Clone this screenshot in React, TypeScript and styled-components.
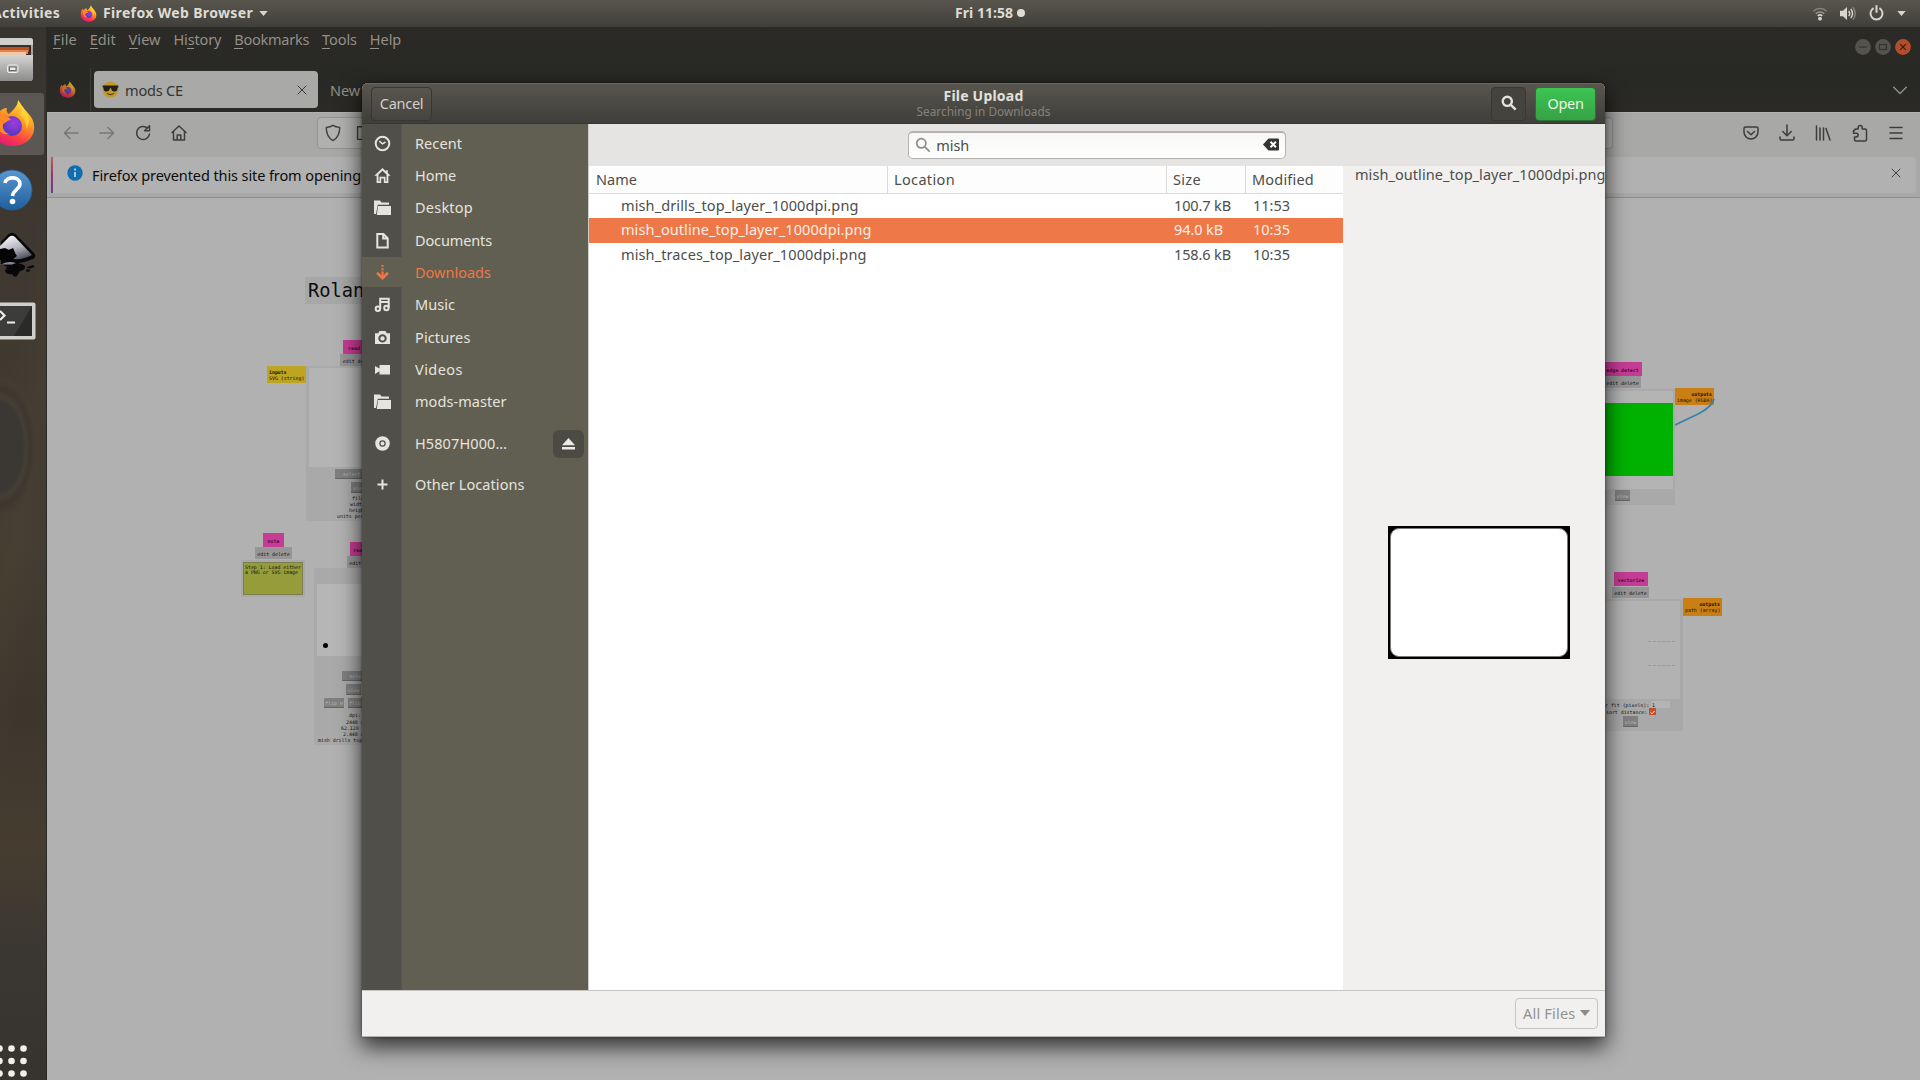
import React, { useLayoutEffect, useRef, useState } from 'react';
import styled, { createGlobalStyle } from 'styled-components';

const UI = '"Noto Sans", "Open Sans", sans-serif';
const MONO = '"DejaVu Sans Mono", "Liberation Mono", monospace';

const Global = createGlobalStyle`
  * { box-sizing: border-box; }
  html, body { margin: 0; padding: 0; overflow: hidden; }
  body { font-family: ${UI}; font-size: 14.5px; }
  svg { display: block; flex: none; }
`;

/* ---------- text that keeps a fixed advance ---------- */
const Run = styled.span`
  display: inline-block;
  white-space: nowrap;
  flex: none;
`;

function Fit({ w, children }: { w: number; children: string }) {
  const ref = useRef<HTMLSpanElement>(null);
  const [spacing, setSpacing] = useState(0);
  useLayoutEffect(() => {
    const el = ref.current;
    if (!el) return;
    el.style.letterSpacing = '0px';
    const natural = el.getBoundingClientRect().width;
    setSpacing((w - natural) / children.length);
  }, [w, children]);
  return (
    <Run ref={ref} style={{ letterSpacing: `${spacing}px` }}>
      {children}
    </Run>
  );
}

/* ---------- desktop ---------- */
const Desktop = styled.div`
  position: relative;
  width: 1920px;
  height: 1080px;
  overflow: hidden;
  display: flex;
  flex-direction: column;
  background: #b1b1b1;
`;

const TopBar = styled.header`
  height: 27px;
  flex: none;
  display: grid;
  grid-template-columns: 103px 852px 1fr auto;
  align-items: center;
  padding-bottom: 1px;
  background: linear-gradient(#58564d, #413f3a);
  color: #dedbd5;
  font-weight: 700;
  font-size: 14px;
  line-height: 24px;
`;
const Activities = styled.div`
  display: flex;
  justify-content: space-between;
  align-items: center;
  margin-left: -8px;
  padding-right: 6px;
`;
const AppMenu = styled.div`
  display: flex;
  align-items: center;
  gap: 6px;
`;
const Clock = styled.div`
  display: flex;
  align-items: center;
  gap: 4px;
`;
const Dot = styled.i`
  width: 8px;
  height: 8px;
  border-radius: 50%;
  background: #dedbd5;
`;
const Tray = styled.div`
  display: flex;
  align-items: center;
  gap: 13px;
  padding-right: 14px;
`;

const Workspace = styled.div`
  flex: 1;
  display: flex;
  min-height: 0;
`;

/* ---------- dock ---------- */
const Dock = styled.nav`
  width: 47px;
  flex: none;
  display: flex;
  flex-direction: column;
  overflow: hidden;
  background:
    radial-gradient(ellipse 42px 80px at 0 420px, #3b3834 0 55%, #453e34 62%, #3d372f 72%, #453d32 84%, transparent 92%),
    linear-gradient(100deg, transparent 30%, rgba(95, 78, 52, 0.16) 45%, transparent 60%),
    linear-gradient(#37342f, #3e3830 20%, #433c32 50%, #3d362d 65%, #463d30 78%, #3a3732 88%, #37342f);
  border-right: 1px solid #2c2a27;
`;
const DockItem = styled.div<{ $h: number; $active?: boolean }>`
  height: ${p => p.$h}px;
  width: 44px;
  display: flex;
  align-items: center;
  flex: none;
  border-radius: 0 3px 3px 0;
  background: ${p => (p.$active ? 'rgba(255,255,255,.17)' : 'transparent')};
`;
const DockSpacer = styled.div`
  flex: 1;
`;

/* ---------- browser ---------- */
const Browser = styled.main`
  flex: 1;
  display: flex;
  flex-direction: column;
  min-width: 0;
`;
const Head = styled.div`
  height: 85px;
  flex: none;
  display: flex;
  flex-direction: column;
  background: linear-gradient(#2b2a26, #282824 60%, #2b2a26);
  color: #929089;
`;
const MenuRow = styled.div`
  height: 41px;
  display: flex;
  justify-content: space-between;
  padding: 2px 9px 0 6px;
`;
const Menus = styled.div`
  display: flex;
  gap: 12.8px;
  line-height: 20px;
`;
const MenuName = styled.div<{ $uw: number; $ux?: number }>`
  height: 21px;
  background: linear-gradient(#929089, #929089) no-repeat ${p => p.$ux ?? 0}px 19px / ${p => p.$uw}px 1px;
`;
const WinButtons = styled.div`
  display: flex;
  gap: 4px;
  padding-top: 10px;
`;
const Tabs = styled.div`
  height: 44px;
  display: flex;
  align-items: center;
  padding-bottom: 1px;
`;
const Pinned = styled.div`
  width: 44px;
  height: 43px;
  padding-left: 12px;
  display: flex;
  align-items: center;
  border-right: 1px solid #3d3c38;
`;
const Tab = styled.div`
  width: 224px;
  height: 37px;
  margin-left: 3px;
  padding: 0 11px 0 8px;
  display: flex;
  align-items: center;
  gap: 6px;
  border-radius: 4px;
  background: #a9a9a8;
  color: #333332;
`;
const TabSide = styled.div`
  margin-left: auto;
`;
const IdleTab = styled.div`
  padding-left: 12px;
  flex: 1;
`;
const TabsEnd = styled.div`
  padding-right: 13px;
`;
const NavBar = styled.div`
  height: 45px;
  flex: none;
  display: flex;
  align-items: center;
  padding: 0 14px 4px 14px;
  background: #a8a8a7;
  border-top: 1px solid #b0b0ae;
`;
const NavGroup = styled.div`
  display: flex;
  gap: 16px;
  color: #3d3d3c;
`;
const UrlBox = styled.div`
  width: 1296px;
  height: 32px;
  margin-left: 128px;
  padding: 0 6px;
  display: flex;
  align-items: center;
  gap: 12px;
  border: 1px solid #929291;
  border-radius: 4px;
  background: #b0b0af;
  color: #3d3d3c;
`;
const Tools = styled.div`
  margin-left: auto;
  display: flex;
  gap: 16.3px;
  color: #3d3d3c;
`;
const NoticeRow = styled.div`
  height: 41px;
  flex: none;
  padding: 0 4px 5px;
  background: #a8a8a7;
  border-bottom: 1px solid #8d8d8c;
`;
const Notice = styled.div`
  height: 36px;
  display: flex;
  align-items: center;
  gap: 9px;
  padding-right: 15px;
  border-radius: 4px;
  background: #b1b1b1;
  color: #0c0c0c;
`;
const Stripe = styled.i`
  width: 2px;
  height: 36px;
  margin-right: 5px;
  background: linear-gradient(#b5654c, #a03070 50%, #6a3d9a);
`;
const NoticeEnd = styled.div`
  margin-left: auto;
  padding-bottom: 4px;
  color: #3d3d3c;
`;
const Page = styled.div`
  flex: 1;
  background: #b1b1b1;
`;

/* ---------- node canvas ---------- */
const Canvas = styled.div`
  position: absolute;
  inset: 0;
  font-family: ${MONO};
  font-size: 4.9px;
  line-height: 6px;
  color: #111;
`;
type Box = { $x: number; $y: number; $w: number; $h: number; $bg?: string };
const Block = styled.div<Box>`
  position: absolute;
  left: ${p => p.$x}px;
  top: ${p => p.$y}px;
  width: ${p => p.$w}px;
  height: ${p => p.$h}px;
  background: ${p => p.$bg ?? '#a9a9a9'};
`;
const Tag = styled(Block)`
  display: flex;
  align-items: center;
  justify-content: center;
  padding-top: 1px;
  white-space: nowrap;
`;
const NodeTitle = styled(Tag)`
  background: #c53c94;
  color: #5a0a40;
  font-weight: 700;
`;
const NodeEdit = styled(Tag)`
  background: #969696;
`;
const NodeButton = styled(Tag)`
  background: #7f7f7f;
  color: #b8b8b8;
  border-bottom: 1px solid #666;
`;
const Port = styled(Block)<{ $right?: boolean }>`
  padding: 3px 2px;
  line-height: 6.4px;
  white-space: nowrap;
  text-align: ${p => (p.$right ? 'right' : 'left')};
`;
const Note = styled(Block)`
  background: #949d3a;
  border: 1px solid #7b7f4d;
  outline: 2px solid #a9a9a9;
  padding: 2px 1px;
  line-height: 5.4px;
`;
const Caption = styled.div<{ $x: number; $y: number }>`
  position: absolute;
  left: ${p => p.$x}px;
  top: ${p => p.$y}px;
  white-space: nowrap;
`;
const Heading = styled(Block)`
  padding-left: 3px;
  font-size: 18.7px;
  line-height: 28px;
  color: #0d0d0d;
`;
const Wire = styled.svg`
  position: absolute;
  left: 1674px;
  top: 398px;
`;
const Overlaid = styled.div<{ $x: number; $y: number; $d: number }>`
  position: absolute;
  left: ${p => p.$x}px;
  top: ${p => p.$y}px;
  width: ${p => p.$d}px;
  height: ${p => p.$d}px;
  border-radius: 50%;
  background: #000;
`;
const DashedLine = styled(Block)`
  background: none;
  border-top: 1px dashed #999;
`;

/* ---------- dialog ---------- */
const Dialog = styled.section`
  position: absolute;
  left: 362px;
  top: 83px;
  width: 1243px;
  height: 954px;
  display: flex;
  flex-direction: column;
  border-radius: 6px 6px 0 0;
  overflow: hidden;
  background: #f1f0ee;
`;
const Shadow = styled.div`
  position: absolute;
  left: 362px;
  top: 83px;
  width: 1243px;
  height: 954px;
  border-radius: 6px 6px 0 0;
  box-shadow: 0 9px 22px 1px rgba(0, 0, 0, 0.72), 0 0 3px rgba(0, 0, 0, 0.5);
`;
const DialogHead = styled.header`
  height: 41px;
  flex: none;
  display: grid;
  grid-template-columns: 1fr auto 1fr;
  align-items: start;
  padding: 4px 9px 0;
  background: linear-gradient(#58564e, #403e3a);
  box-shadow: inset 0 1px #67655c;
  border-bottom: 1px solid #383632;
  color: #e3e1dc;
`;
const HeadButton = styled.button<{ $w: number; $tone?: 'green' | 'pressed' }>`
  width: ${p => p.$w}px;
  height: 34px;
  padding: 0 0 2px;
  display: flex;
  align-items: center;
  justify-content: center;
  font: inherit;
  line-height: 20px;
  border-radius: 4px;
  border: 1px solid ${p => (p.$tone === 'green' ? '#26752f' : '#393733')};
  background: ${p =>
    p.$tone === 'green' ? 'linear-gradient(#3cc552, #37a246)' : p.$tone === 'pressed' ? '#45433d' : 'linear-gradient(#57554c, #474540)'};
  color: ${p => (p.$tone === 'green' ? '#e9f7e6' : '#d3d0ca')};
`;
const HeadEnd = styled.div`
  display: flex;
  justify-content: flex-end;
  gap: 9px;
`;
const Titles = styled.div`
  display: flex;
  flex-direction: column;
  align-items: center;
`;
const Title = styled.div`
  font-weight: 700;
  font-size: 14px;
  line-height: 17px;
`;
const Subtitle = styled.div`
  font-size: 11.8px;
  line-height: 15px;
  color: #85837b;
`;
const DialogBody = styled.div`
  height: 867px;
  flex: none;
  display: flex;
  border-bottom: 1px solid #c6c5c1;
`;
const Sidebar = styled.aside`
  width: 227px;
  flex: none;
  padding-top: 4px;
  display: flex;
  flex-direction: column;
  gap: 2.36px;
  border-right: 1px solid #cfcdc8;
  background: linear-gradient(90deg, #504f49 0 39px, #57564c 39px 40px, #615f52 40px);
`;
const Place = styled.div<{ $active?: boolean; $gap?: number }>`
  height: 30px;
  flex: none;
  margin-top: ${p => p.$gap ?? 0}px;
  display: grid;
  grid-template-columns: 40px 1fr auto;
  align-items: center;
  line-height: 20px;
  background: ${p => (p.$active ? '#615f52' : 'transparent')};
  color: ${p => (p.$active ? '#ee7744' : '#e6e4df')};
`;
const PlaceIcon = styled.div`
  display: flex;
  justify-content: center;
`;
const PlaceName = styled.div`
  padding: 0 0 1px 13px;
`;
const Eject = styled.div`
  width: 31px;
  height: 28px;
  margin-right: 4px;
  display: flex;
  align-items: center;
  justify-content: center;
  border-radius: 6px;
  background: #4b4a43;
`;
const Content = styled.div`
  flex: 1;
  display: flex;
  flex-direction: column;
`;
const SearchBar = styled.div`
  height: 42px;
  flex: none;
  display: flex;
  justify-content: center;
  align-items: flex-start;
  padding-top: 7px;
  background: #e5e4e2;
`;
const SearchField = styled.div`
  width: 378px;
  height: 28px;
  display: flex;
  align-items: center;
  gap: 5px;
  padding: 0 6px 2px 6px;
  border: 1px solid #b5b2ad;
  border-top-width: 2px;
  border-radius: 5px;
  background: linear-gradient(#f7f7f6, #fff);
  color: #4b4c4a;
  line-height: 20px;
`;
const SearchEnd = styled.div`
  margin-left: auto;
`;
const Split = styled.div`
  flex: 1;
  display: flex;
`;
const FileList = styled.div`
  width: 754px;
  background: #fff;
  color: #4c4d4b;
`;
const columns = '299px 279px 79px 97px';
const Columns = styled.div`
  height: 28px;
  display: grid;
  grid-template-columns: ${columns};
  line-height: 27px;
  border-bottom: 1px solid #dcdbd9;
  background: #fdfdfd;
`;
const ColumnName = styled.div<{ $last?: boolean; $pad?: number }>`
  padding-left: ${p => p.$pad ?? 6}px;
  border-right: ${p => (p.$last ? 0 : 1)}px solid #dcdbd9;
`;
const FileRow = styled.div<{ $on?: boolean }>`
  height: 24.4px;
  display: grid;
  grid-template-columns: ${columns};
  line-height: 22.4px;
  background: ${p => (p.$on ? '#ee7847' : '#fff')};
  color: ${p => (p.$on ? '#fdeee6' : 'inherit')};
`;
const Cell = styled.div<{ $pad: number }>`
  padding-left: ${p => p.$pad}px;
`;
const Preview = styled.div`
  flex: 1;
  display: flex;
  flex-direction: column;
  padding: 0 0 0 12px;
  color: #4c4d4b;
  overflow: hidden;
`;
const PreviewName = styled.div`
  height: 18px;
  line-height: 16px;
`;
const PreviewArt = styled.div`
  flex: 1;
  padding: 342px 34px 0 33px;
`;
const Board = styled.div`
  width: 182px;
  height: 133px;
  padding: 2px;
  background: #000;
`;
const BoardInner = styled.div`
  height: 129px;
  border-radius: 9px;
  background: #fff;
  border: 1px solid #777;
`;
const DialogFoot = styled.footer`
  flex: 1;
  display: flex;
  justify-content: flex-end;
  align-items: flex-start;
  padding: 7px 7px 0 0;
  border-bottom: 1px solid #b5b4b1;
`;
const Filter = styled.div`
  width: 83px;
  height: 31px;
  display: flex;
  align-items: center;
  justify-content: space-between;
  padding: 0 7px 1px;
  line-height: 20px;
  border: 1px solid #c6c4c0;
  border-radius: 4px;
  color: #929290;
`;

/* ---------- icons ---------- */
const Fox = ({ s, o = 1 }: { s: number; o?: number }) => (
  <svg width={s} height={s} viewBox="0 0 48 48" opacity={o}>
    <defs>
      <linearGradient id={`fx${s}`} x1=".8" y1=".05" x2=".3" y2="1">
        <stop offset="0" stopColor="#ffe640" />
        <stop offset=".38" stopColor="#ff9a22" />
        <stop offset=".72" stopColor="#fb3f45" />
        <stop offset="1" stopColor="#e2197a" />
      </linearGradient>
      <radialGradient id={`fp${s}`} cx=".6" cy=".35" r=".7">
        <stop offset="0" stopColor="#a13be0" />
        <stop offset="1" stopColor="#4b38b8" />
      </radialGradient>
    </defs>
    <path d="M30 1c4 5 5 8 9 12 5 5 8 11 7 18-1 9-10 16-21 16C12 47 2 38 2 26c0-6 2-12 6-16 0 3 1 4 2 5 2-4 5-6 9-6-1 3 0 5 2 6 4-4 9-8 9-14Z" fill={`url(#fx${s})`} />
    <circle cx="24" cy="27" r="10" fill={`url(#fp${s})`} />
    <path d="M8 17c5-3 12-1 15 4-4 0-5 3-8 4-1 5 2 9 7 10-9 2-15-5-14-18Z" fill="#ff8a26" />
    <path d="M30 2c4 6 5 10 2 14 4 3 7 8 6 14 5-7 3-14-1-19-3-4-5-6-7-9Z" fill="#ffd93b" opacity=".75" />
  </svg>
);

type LineProps = { s?: number; w?: number; o?: number; children: React.ReactNode };
const Line = ({ s = 20, w = 1.5, o = 1, children }: LineProps) => (
  <svg width={s} height={s} viewBox="0 0 20 20" fill="none" stroke="currentColor" strokeWidth={w} strokeLinecap="round" strokeLinejoin="round" opacity={o}>
    {children}
  </svg>
);

const Caret = ({ w, h, fill }: { w: number; h: number; fill: string }) => (
  <svg width={w} height={h} viewBox="0 0 10 6"><path d="M0 0h10L5 6z" fill={fill} /></svg>
);

const Magnifier = ({ w, color }: { w: number; color: string }) => (
  <svg width="16" height="16" viewBox="0 0 16 16" fill="none" stroke={color} strokeWidth={w}>
    <circle cx="6.3" cy="6.3" r="4.6" />
    <path d="M9.8 9.8l4.9 4.9" />
  </svg>
);

const TrayIcons = () => (
  <>
    <svg width="14" height="15" viewBox="0 0 14 15" fill="none" stroke="#d8d5cf" strokeWidth="1.6">
      <path d="M.5 5.2a9.3 9.3 0 0 1 13 0" opacity=".4" />
      <path d="M2.8 7.7a6 6 0 0 1 8.4 0" opacity=".55" />
      <path d="M4.8 9.900a3.200 3.200 0 0 1 4.400 0" />
      <circle cx="7" cy="12.700" r="1.900" fill="#d8d5cf" stroke="none" />
    </svg>
    <svg width="16" height="15" viewBox="0 0 16 15" fill="none" stroke="#d8d5cf" strokeWidth="1.5">
      <path d="M0 4.8h3L7 1v13l-4-3.8H0z" fill="#d8d5cf" stroke="none" />
      <path d="M8.7 5a4 4 0 0 1 0 5" />
      <path d="M10.7 3a6.5 6.5 0 0 1 0 9" />
      <path d="M12.8 1.2a9.5 9.5 0 0 1 0 12.6" opacity=".4" />
    </svg>
    <svg width="15" height="16" viewBox="0 0 15 16" fill="none" stroke="#d8d5cf" strokeWidth="2">
      <path d="M4.600 3.200a6 6 0 1 0 5.800 0M7.500 .3v7.400" />
    </svg>
    <Caret w={9} h={5} fill="#d8d5cf" />
  </>
);

const WinButton = ({ kind }: { kind: 'min' | 'max' | 'close' }) => (
  <svg width="16" height="16" viewBox="0 0 16 16">
    <circle cx="8" cy="8" r="7.900" fill={kind === 'close' ? '#b24d2b' : '#55534e'} />
    <g stroke={kind === 'close' ? '#3c170a' : '#33322e'} fill="none" strokeWidth="1.2">
      {kind === 'min' && <path d="M4 8h8" />}
      {kind === 'max' && <rect x="4.5" y="5.5" width="7" height="5" />}
      {kind === 'close' && <path d="M5.2 5.2l5.6 5.6M10.8 5.2l-5.6 5.6" />}
    </g>
  </svg>
);

const Shades = () => (
  <svg width="17" height="17" viewBox="0 0 17 17">
    <circle cx="8.5" cy="8.5" r="8" fill="#c09a2c" />
    <path d="M.6 4.6h15.800v1.600l-.8.4c0 2.800-.8 3.900-3.100 3.900-2.200 0-3-1.300-3.400-3.300h-1.200c-.4 2-1.200 3.300-3.400 3.300-2.300 0-3.100-1.100-3.100-3.900l-.8-.4z" fill="#241f18" />
    <path d="M5 12.2c2 1.700 5 1.700 7 0" stroke="#5b4214" fill="none" strokeWidth="1.1" />
  </svg>
);

const FilesIcon = () => (
  <svg width="36" height="46" viewBox="0 0 36 46">
    <defs>
      <linearGradient id="cab" x1="0" y1="0" x2="0" y2="1">
        <stop offset="0" stopColor="#d4d4d2" />
        <stop offset="1" stopColor="#8c8c8b" />
      </linearGradient>
    </defs>
    <path d="M0 1h30q3 0 3 3v36q0 4-3 4H0z" fill="#a5a5a3" />
    <path d="M0 1h30q3 0 3 3v4H0z" fill="#cfcfcd" />
    <path d="M0 8h31v11H0z" fill="#3b2f28" />
    <path d="M0 10h29v5H0z" fill="#b9501f" />
    <path d="M0 13h28v4H0z" fill="#df8452" />
    <path d="M0 15h26v4H0z" fill="#efc9a8" />
    <path d="M0 18h33v22q0 4-3 4H0z" fill="url(#cab)" />
    <rect x="7.5" y="28" width="10.5" height="7.5" rx="1.5" fill="#b0b0ae" stroke="#f0f0ee" />
    <rect x="9.5" y="30" width="6.5" height="3.5" fill="#e8e8e6" stroke="#555" strokeWidth=".8" />
  </svg>
);

const HelpIcon = () => (
  <svg width="34" height="42" viewBox="0 0 34 42">
    <defs>
      <linearGradient id="hp" x1="0" y1="0" x2="0" y2="1">
        <stop offset="0" stopColor="#5a97cf" />
        <stop offset="1" stopColor="#1f5f9e" />
      </linearGradient>
    </defs>
    <circle cx="12" cy="21" r="20" fill="url(#hp)" stroke="#2d5f90" />
    <path d="M5 14c1-7 15-7 15 1 0 5-7 6-7.500 12" fill="none" stroke="#fff" strokeWidth="3.600" />
    <circle cx="12.5" cy="32.5" r="2.8" fill="#fff" />
  </svg>
);

const InkIcon = () => (
  <svg width="38" height="46" viewBox="0 0 38 46">
    <defs>
      <linearGradient id="ink" x1=".3" y1="0" x2=".8" y2="1">
        <stop offset="0" stopColor="#f5f5f7" />
        <stop offset=".5" stopColor="#b5b5be" />
        <stop offset="1" stopColor="#45454f" />
      </linearGradient>
    </defs>
    <path d="M8 2.500Q12-1 16 2.500L34 21q3 4-1 6-7 3-15 4 8 2 7 4 0 3-5 4l-3 5q-3 2-5-2-5 1-7-3l2-4-6-3V10z" fill="#08080a" />
    <path d="M9 5q3-2.500 6 0l17 18q-8 5-20 4l-4-3 7-3-2-4-5 1-3-1-5 2V14z" fill="url(#ink)" />
    <path d="M0 17l5-1 4 2 4-2 2 5 2 3-5 4H0z" fill="#050506" />
    <path d="M0 33q8-5 16-2l-4 1.500H0z" fill="#8a8a94" />
    <path d="M26 35.500l7-2.500 1.500 2-4 1.500z" fill="#08080a" />
    <ellipse cx="28" cy="38.500" rx="2" ry="1.300" fill="#08080a" />
  </svg>
);

const TermIcon = () => (
  <svg width="36" height="38" viewBox="0 0 36 38">
    <rect x="-10" y=".5" width="45.500" height="37" rx="2" fill="#cfcfcc" />
    <rect x="-10" y="4" width="42" height="30" fill="#2a2a29" />
    <path d="M0 4h32L14 34H0z" fill="#4a4a48" opacity=".6" />
    <path d="M0 9l4.500 4.500L0 18" fill="none" stroke="#eee" strokeWidth="2.200" />
    <path d="M7 20.500h8" stroke="#eee" strokeWidth="2" />
  </svg>
);

const AppsIcon = () => (
  <svg width="30" height="34" viewBox="0 0 30 34" fill="#f1efec">
    {[5.5, 18, 30.5].map(y => [-0.5, 11.5, 23.5].map(x => <circle key={`${x}-${y}`} cx={x} cy={y} r="3.3" />))}
  </svg>
);

const folder = (
  <>
    <path d="M0 1.500h6l1.500 2H15v2.300H3.800L2 15H0z" fill="currentColor" />
    <path d="M4 7h13v9H2.800z" fill="currentColor" />
  </>
);
const placeIcons: Record<string, React.ReactNode> = {
  recent: <g fill="none" stroke="currentColor" strokeWidth="2"><circle cx="8.5" cy="8.5" r="6.8" /><path d="M5.300 6.200l3.200 2.600 3-1.800" strokeWidth="1.5" /></g>,
  home: <path d="M8.500 1L.3 8.800h2.300V16h4.600v-4.600h2.600V16h4.600V8.800h2.300L13.800 6V3.200h-1.900v1zM8.500 3.800L12.500 7.600v6.600h-1V9.700H5.500v4.500h-1V7.600z" fill="currentColor" fillRule="evenodd" />,
  folder,
  doc: <path d="M3.300 2h6.200l4.200 4.300V15.500H3.300zM9.200 2v4.500h4.300" fill="none" stroke="currentColor" strokeWidth="2" />,
  down: <g fill="none" stroke="currentColor" strokeWidth="2.2"><path d="M8.500 1v1.800M8.500 4.200v2M8.500 7.500V14" /><path d="M3 8.800l5.500 5.400L14 8.800" strokeWidth="2.6" /></g>,
  music: <g fill="none" stroke="currentColor" strokeWidth="2"><path d="M6.200 12.700V2.700h8.500v9M6.200 6h8.500" /><circle cx="3.9" cy="12.7" r="2.2" /><circle cx="12.4" cy="12" r="2.2" /></g>,
  camera: <path d="M5.500 2h6l1.200 2.200H16V15H1V4.200h3.300zM8.500 5.200a4.200 4.200 0 1 0 0 8.400 4.200 4.200 0 0 0 0-8.400zM8.500 7.200a2.200 2.200 0 1 1 0 4.400 2.200 2.200 0 0 1 0-4.400z" fill="currentColor" fillRule="evenodd" />,
  video: <path d="M5.500 4H16v9.500H5.500V10.300L1 13V5l4.500 2.600z" fill="currentColor" />,
  disc: <g><path d="M8.500 1.200a7.300 7.300 0 1 0 0 14.600 7.300 7.300 0 0 0 0-14.600zM8.500 5.300a3.200 3.200 0 1 1 0 6.400 3.200 3.200 0 0 1 0-6.400z" fill="currentColor" fillRule="evenodd" /><circle cx="8.5" cy="8.5" r="1.9" fill="currentColor" /></g>,
  plus: <path d="M8.500 3.500v10M3.500 8.500h10" fill="none" stroke="currentColor" strokeWidth="2" />,
};

const places: { icon: string; name: string; w: number; active?: boolean; gap?: number; eject?: boolean }[] = [
  { icon: 'recent', name: 'Recent', w: 47 },
  { icon: 'home', name: 'Home', w: 41 },
  { icon: 'folder', name: 'Desktop', w: 58 },
  { icon: 'doc', name: 'Documents', w: 77 },
  { icon: 'down', name: 'Downloads', w: 76, active: true },
  { icon: 'music', name: 'Music', w: 40 },
  { icon: 'camera', name: 'Pictures', w: 55.5 },
  { icon: 'video', name: 'Videos', w: 48 },
  { icon: 'folder', name: 'mods-master', w: 91.5 },
  { icon: 'disc', name: 'H5807H000…', w: 92, gap: 9.3, eject: true },
  { icon: 'plus', name: 'Other Locations', w: 109.5, gap: 8.8 },
];

const files = [
  { name: 'mish_drills_top_layer_1000dpi.png', w: 237.5, size: '100.7 kB', sw: 57, time: '11:53' },
  { name: 'mish_outline_top_layer_1000dpi.png', w: 250.5, size: '94.0 kB', sw: 49, time: '10:35', on: true },
  { name: 'mish_traces_top_layer_1000dpi.png', w: 245.5, size: '158.6 kB', sw: 57, time: '10:35' },
];

const menus = [
  { name: 'File', w: 24, u: 8 },
  { name: 'Edit', w: 26, u: 8 },
  { name: 'View', w: 32, u: 9 },
  { name: 'History', w: 48, u: 7, x: 14 },
  { name: 'Bookmarks', w: 75, u: 9 },
  { name: 'Tools', w: 35, u: 8 },
  { name: 'Help', w: 31.5, u: 9 },
];

function BrowserWindow() {
  return (
    <Browser>
      <Head>
        <MenuRow>
          <Menus>
            {menus.map(m => (
              <MenuName key={m.name} $uw={m.u} $ux={m.x}><Fit w={m.w}>{m.name}</Fit></MenuName>
            ))}
          </Menus>
          <WinButtons>
            <WinButton kind="min" />
            <WinButton kind="max" />
            <WinButton kind="close" />
          </WinButtons>
        </MenuRow>
        <Tabs>
          <Pinned><Fox s={17} o={0.7} /></Pinned>
          <Tab>
            <Shades />
            <Fit w={58}>mods CE</Fit>
            <TabSide><Line s={10} w={1.9}><path d="M2 2l16 16M18 2L2 18" /></Line></TabSide>
          </Tab>
          <IdleTab><Fit w={30}>New</Fit></IdleTab>
          <TabsEnd><Line s={14} w={2}><path d="M1 6l9 9 9-9" /></Line></TabsEnd>
        </Tabs>
      </Head>
      <NavBar>
        <NavGroup>
          <Line o={0.45}><path d="M3.5 10H17M9 4.500L3.500 10 9 15.500" /></Line>
          <Line o={0.45}><path d="M3 10h13.500M11 4.500l5.500 5.500-5.500 5.500" /></Line>
          <Line><path d="M16.500 11a6.500 6.500 0 1 1-2-5.700M16.500 2.800v5h-5z" /></Line>
          <Line><path d="M3 9.500L10 3l7 6.500M4.500 8.500V17h11V8.500M8.200 17v-5h3.600v5" /></Line>
        </NavGroup>
        <UrlBox>
          <Line s={18}><path d="M10 1.500c2.500 1.600 5 2 7.500 2.200 0 7-1.500 11.500-7.500 14.800C4 15.200 2.500 10.700 2.500 3.700 5 3.500 7.500 3.100 10 1.500z" /></Line>
          <Line s={18}><path d="M4 3h9l4 4v10H4z" /></Line>
        </UrlBox>
        <Tools>
          <Line><path d="M4.500 4h11q1.500 0 1.500 1.500V9a7 7 0 0 1-14 0V5.500Q3 4 4.500 4zM6.500 8.500L10 11.700l3.500-3.200" /></Line>
          <Line><path d="M10 2v10.500M5.800 8.500L10 12.700l4.200-4.200M3 14v1.500q0 1.500 1.500 1.500h11q1.500 0 1.500-1.500V14" /></Line>
          <Line><path d="M3.500 3v14M7 5v12M10.500 5v12M13 5.500l4 11.500" /></Line>
          <Line><path d="M4.500 7.500q0-1.500 1.500-1.500h2.200V4.500a2 2 0 0 1 4 0V6H15q1.500 0 1.500 1.500v9q0 1.500-1.500 1.500H6q-1.500 0-1.500-1.500V14h1.700a1.900 1.900 0 0 0 0-3.800H3.500V7.500z" /></Line>
          <Line><path d="M4 4.500h12M4 10h12M4 15.500h12" /></Line>
        </Tools>
      </NavBar>
      <NoticeRow>
        <Notice>
          <Stripe />
          <svg width="16" height="20" viewBox="0 0 16 20">
            <circle cx="8" cy="8" r="7.700" fill="#0f6db0" />
            <path d="M8 7v5M8 3.500v2" stroke="#c3d6e4" strokeWidth="1.700" />
          </svg>
          <Fit w={269}>Firefox prevented this site from opening</Fit>
          <NoticeEnd><Line s={10} w={1.9}><path d="M2 2l16 16M18 2L2 18" /></Line></NoticeEnd>
        </Notice>
      </NoticeRow>
      <Page />
    </Browser>
  );
}

function NodeCanvas() {
  return (
    <Canvas>
      <Heading $x={305} $y={277} $w={60} $h={27} $bg="#a7a7a7">Rolan</Heading>

      <Block $x={306} $y={366} $w={120} $h={155} />
      <Block $x={309} $y={368} $w={110} $h={99} $bg="#b4b4b4" />
      <NodeTitle $x={343} $y={340} $w={22} $h={14}>read</NodeTitle>
      <NodeEdit $x={340} $y={354} $w={38} $h={12}>edit delete</NodeEdit>
      <NodeButton $x={335} $y={469} $w={48} $h={10}>select file</NodeButton>
      <NodeButton $x={351} $y={482} $w={16} $h={11}>view</NodeButton>
      <Caption $x={352} $y={495}>file:</Caption>
      <Caption $x={350} $y={501}>width:</Caption>
      <Caption $x={349} $y={507}>height:</Caption>
      <Caption $x={337} $y={513}>units per</Caption>
      <Port $x={267} $y={366} $w={39} $h={17} $bg="#bda421"><b>inputs</b><br />SVG (string)</Port>

      <NodeTitle $x={263} $y={533} $w={21} $h={14}>note</NodeTitle>
      <NodeEdit $x={255} $y={547} $w={37} $h={12}>edit delete</NodeEdit>
      <Note $x={243} $y={562} $w={60} $h={33}>Step 1: Load either<br />a PNG or SVG image</Note>

      <Block $x={314} $y={568} $w={110} $h={177} />
      <Block $x={317} $y={584} $w={100} $h={72} $bg="#b6b6b6" />
      <Overlaid $x={322.5} $y={643} $d={5} />
      <NodeTitle $x={350} $y={542} $w={30} $h={14}>read png</NodeTitle>
      <NodeEdit $x={347} $y={556} $w={37} $h={12}>edit delete</NodeEdit>
      <NodeButton $x={342} $y={671} $w={44} $h={10}>select png</NodeButton>
      <NodeButton $x={346} $y={684} $w={15} $h={11}>view</NodeButton>
      <NodeButton $x={324} $y={698} $w={20} $h={10}>flip H</NodeButton>
      <NodeButton $x={348} $y={698} $w={20} $h={10}>flip V</NodeButton>
      <Caption $x={349} $y={712}>dpi:</Caption>
      <Caption $x={346} $y={719}>2448 x</Caption>
      <Caption $x={341} $y={725}>62.129 x</Caption>
      <Caption $x={343} $y={731}>2.448 x</Caption>
      <Caption $x={318} $y={737}>mish drills top</Caption>

      <Block $x={1560} $y={389} $w={115} $h={116} />
      <Block $x={1560} $y={391} $w={113} $h={98} $bg="#b4b4b4" />
      <Block $x={1560} $y={403} $w={113} $h={73} $bg="#00b200" />
      <NodeTitle $x={1603} $y={362} $w={39} $h={14}>edge detect</NodeTitle>
      <NodeEdit $x={1604} $y={376} $w={37} $h={12}>edit delete</NodeEdit>
      <NodeButton $x={1615} $y={490} $w={15} $h={11}>view</NodeButton>
      <Port $right $x={1675} $y={388} $w={39} $h={17} $bg="#c97f13"><b>outputs</b><br />image (RGBA)</Port>
      <Wire width="42" height="30"><path d="M1 27L24 16Q38 9 40 1" fill="none" stroke="#3583a6" strokeWidth="1.8" /></Wire>

      <Block $x={1560} $y={599} $w={123} $h={132} />
      <Block $x={1560} $y={601} $w={120} $h={98} $bg="#b2b2b2" />
      <DashedLine $x={1648} $y={641} $w={27} $h={1} />
      <DashedLine $x={1648} $y={665} $w={27} $h={1} />
      <NodeTitle $x={1614} $y={572} $w={34} $h={14}>vectorize</NodeTitle>
      <NodeEdit $x={1612} $y={587} $w={37} $h={11}>edit delete</NodeEdit>
      <Port $right $x={1683} $y={598} $w={39} $h={18} $bg="#c97f13"><b>outputs</b><br />path (array)</Port>
      <Block $x={1651} $y={701} $w={19} $h={7} $bg="#b4b4b4" />
      <Caption $x={1605} $y={702}>r fit (pixels):</Caption>
      <Caption $x={1652} $y={702}>1</Caption>
      <Caption $x={1606} $y={709}>sort distance:</Caption>
      <Tag $x={1649} $y={708} $w={7} $h={7} $bg="#c4502a">
        <svg width="5" height="5" viewBox="0 0 5 5"><path d="M.6 2.500l1.400 1.400L4.500 1" fill="none" stroke="#eee" /></svg>
      </Tag>
      <NodeButton $x={1623} $y={716} $w={15} $h={11}>view</NodeButton>
    </Canvas>
  );
}

function UploadDialog() {
  return (
    <Dialog>
      <DialogHead>
        <HeadButton $w={61}><Fit w={43.5}>Cancel</Fit></HeadButton>
        <Titles>
          <Title><Fit w={80}>File Upload</Fit></Title>
          <Subtitle><Fit w={134}>Searching in Downloads</Fit></Subtitle>
        </Titles>
        <HeadEnd>
          <HeadButton $w={35} $tone="pressed"><Magnifier w={2.4} color="#e3e1dc" /></HeadButton>
          <HeadButton $w={61} $tone="green"><Fit w={36}>Open</Fit></HeadButton>
        </HeadEnd>
      </DialogHead>
      <DialogBody>
        <Sidebar>
          {places.map(p => (
            <Place key={p.name} $active={p.active} $gap={p.gap}>
              <PlaceIcon><svg width="17" height="17" viewBox="0 0 17 17">{placeIcons[p.icon]}</svg></PlaceIcon>
              <PlaceName><Fit w={p.w}>{p.name}</Fit></PlaceName>
              {p.eject && (
                <Eject>
                  <svg width="13" height="12" viewBox="0 0 13 12" fill="#eceae6"><path d="M6.500 0L13 7.300H0zM0 9h13v2.500H0z" /></svg>
                </Eject>
              )}
            </Place>
          ))}
        </Sidebar>
        <Content>
          <SearchBar>
            <SearchField>
              <Magnifier w={1.8} color="#8f8e8b" />
              <Fit w={33}>mish</Fit>
              <SearchEnd>
                <svg width="16" height="13" viewBox="0 0 16 13">
                  <path d="M5.500 .5H15q1 0 1 1v10q0 1-1 1H5.500L0 6.500z" fill="#343533" />
                  <path d="M7.500 3.700l5.400 5.600M12.900 3.700L7.500 9.300" stroke="#fff" strokeWidth="2" />
                </svg>
              </SearchEnd>
            </SearchField>
          </SearchBar>
          <Split>
            <FileList>
              <Columns>
                <ColumnName $pad={7}><Fit w={41}>Name</Fit></ColumnName>
                <ColumnName><Fit w={61}>Location</Fit></ColumnName>
                <ColumnName><Fit w={28}>Size</Fit></ColumnName>
                <ColumnName $last><Fit w={62}>Modified</Fit></ColumnName>
              </Columns>
              {files.map(f => (
                <FileRow key={f.name} $on={f.on}>
                  <Cell $pad={32}><Fit w={f.w}>{f.name}</Fit></Cell>
                  <Cell $pad={7} />
                  <Cell $pad={7}><Fit w={f.sw}>{f.size}</Fit></Cell>
                  <Cell $pad={7}><Fit w={37}>{f.time}</Fit></Cell>
                </FileRow>
              ))}
            </FileList>
            <Preview>
              <PreviewName><Fit w={250.5}>mish_outline_top_layer_1000dpi.png</Fit></PreviewName>
              <PreviewArt>
                <Board><BoardInner /></Board>
              </PreviewArt>
            </Preview>
          </Split>
        </Content>
      </DialogBody>
      <DialogFoot>
        <Filter><Fit w={52.5}>All Files</Fit><Caret w={10} h={6} fill="#8b8b88" /></Filter>
      </DialogFoot>
    </Dialog>
  );
}

export default function App() {
  return (
    <Desktop>
      <Global />
      <TopBar>
        <Activities><Fit w={68}>Activities</Fit><Fox s={17} /></Activities>
        <AppMenu><Fit w={150}>Firefox Web Browser</Fit><Caret w={9} h={5} fill="#d8d5cf" /></AppMenu>
        <Clock><Fit w={58}>Fri 11:58</Fit><Dot /></Clock>
        <Tray><TrayIcons /></Tray>
      </TopBar>
      <Workspace>
        <Dock>
          <DockItem $h={66}><FilesIcon /></DockItem>
          <DockItem $h={62} $active>
            <svg width="36" height="50" viewBox="12 0 36 50"><Fox s={48} /></svg>
          </DockItem>
          <DockItem $h={70}><HelpIcon /></DockItem>
          <DockItem $h={59}><InkIcon /></DockItem>
          <DockItem $h={73}><TermIcon /></DockItem>
          <DockSpacer />
          <DockItem $h={41}><AppsIcon /></DockItem>
        </Dock>
        <BrowserWindow />
      </Workspace>
      <NodeCanvas />
      <Shadow />
      <UploadDialog />
    </Desktop>
  );
}
